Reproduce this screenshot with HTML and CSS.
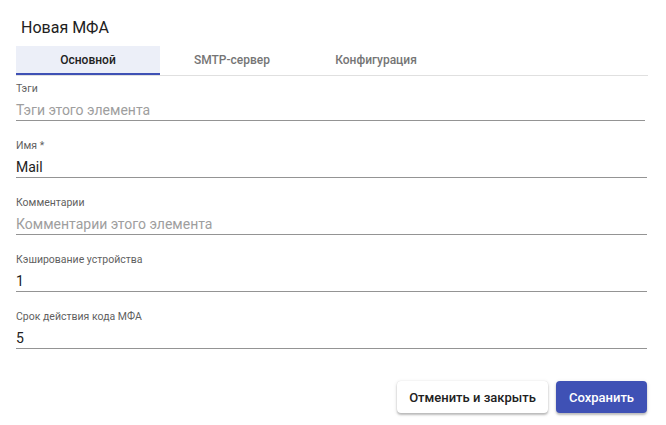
FILE: index.html
```html
<!DOCTYPE html>
<html lang="ru">
<head>
<meta charset="utf-8">
<link rel="stylesheet" href="styles.css">
</head>
<body>
<div class="dialog">
  <h1 class="title">Новая МФА</h1>
  <div class="tabs">
    <div class="tab active">Основной</div>
    <div class="tab">SMTP-сервер</div>
    <div class="tab">Конфигурация</div>
  </div>
  <div class="form">
    <div class="field narrow">
      <div class="label">Тэги</div>
      <div class="input placeholder">Тэги этого элемента</div>
    </div>
    <div class="field">
      <div class="label">Имя *</div>
      <div class="input">Mail</div>
    </div>
    <div class="field">
      <div class="label">Комментарии</div>
      <div class="input placeholder">Комментарии этого элемента</div>
    </div>
    <div class="field">
      <div class="label">Кэширование устройства</div>
      <div class="input">1</div>
    </div>
    <div class="field">
      <div class="label">Срок действия кода МФА</div>
      <div class="input">5</div>
    </div>
  </div>
  <div class="actions">
    <button class="btn btn-cancel">Отменить и закрыть</button>
    <button class="btn btn-save">Сохранить</button>
  </div>
</div>
</body>
</html>
```
FILE: styles.css
```css
* { box-sizing: border-box; }
html, body {
  margin: 0;
  padding: 0;
  background: #fff;
  font-family: Roboto, "Noto Sans", sans-serif;
  color: #212121;
}
.dialog {
  width: 666px;
  height: 425px;
  padding: 18px 19px 0 16px;
}
.title {
  margin: 0 0 0 5px;
  font-size: 16px;
  font-weight: 400;
  line-height: 20px;
  height: 20px;
  color: #212121;
}
.tabs {
  margin-top: 8px;
  display: flex;
  border-bottom: 1px solid #e0e0e0;
  width: 632px;
}
.tab {
  width: 144px;
  height: 29px;
  display: flex;
  align-items: center;
  justify-content: center;
  font-size: 12px;
  font-weight: 500;
  color: #757575;
  padding-bottom: 2px;
}
.tab.active {
  background: #eceff8;
  color: #212121;
  border-bottom: 2px solid #3f51b5;
  padding-bottom: 0;
}
.form {
  margin-top: 7px;
  display: flex;
  flex-direction: column;
  gap: 19px;
}
.field {
  display: flex;
  flex-direction: column;
}
.field.narrow { width: 629px; }
.label {
  font-size: 10.5px;
  line-height: 12px;
  height: 12px;
  color: #5f5f5f;
}
.input {
  margin-top: 5px;
  font-size: 14px;
  line-height: 20px;
  height: 21px;
  border-bottom: 1px solid #949494;
  color: #212121;
}
.input.placeholder { color: #9e9e9e; }
.actions {
  margin-top: 32px;
  display: flex;
  justify-content: flex-end;
  gap: 8px;
}
.btn {
  height: 32px;
  border: none;
  border-radius: 4px;
  font-family: Roboto, "Noto Sans", sans-serif;
  font-size: 13px;
  font-weight: 500;
  padding: 0;
  white-space: nowrap;
  cursor: pointer;
}
.btn-cancel {
  width: 151px;
  background: #fff;
  color: #212121;
  box-shadow: 0 2px 2px rgba(0,0,0,0.2), 0 1px 4px rgba(0,0,0,0.12), 0 0 1px rgba(0,0,0,0.14);
}
.btn-save {
  width: 91px;
  background: #3f51b5;
  color: #fff;
  box-shadow: 0 2px 2px rgba(0,0,0,0.2), 0 1px 4px rgba(0,0,0,0.12);
}
```
